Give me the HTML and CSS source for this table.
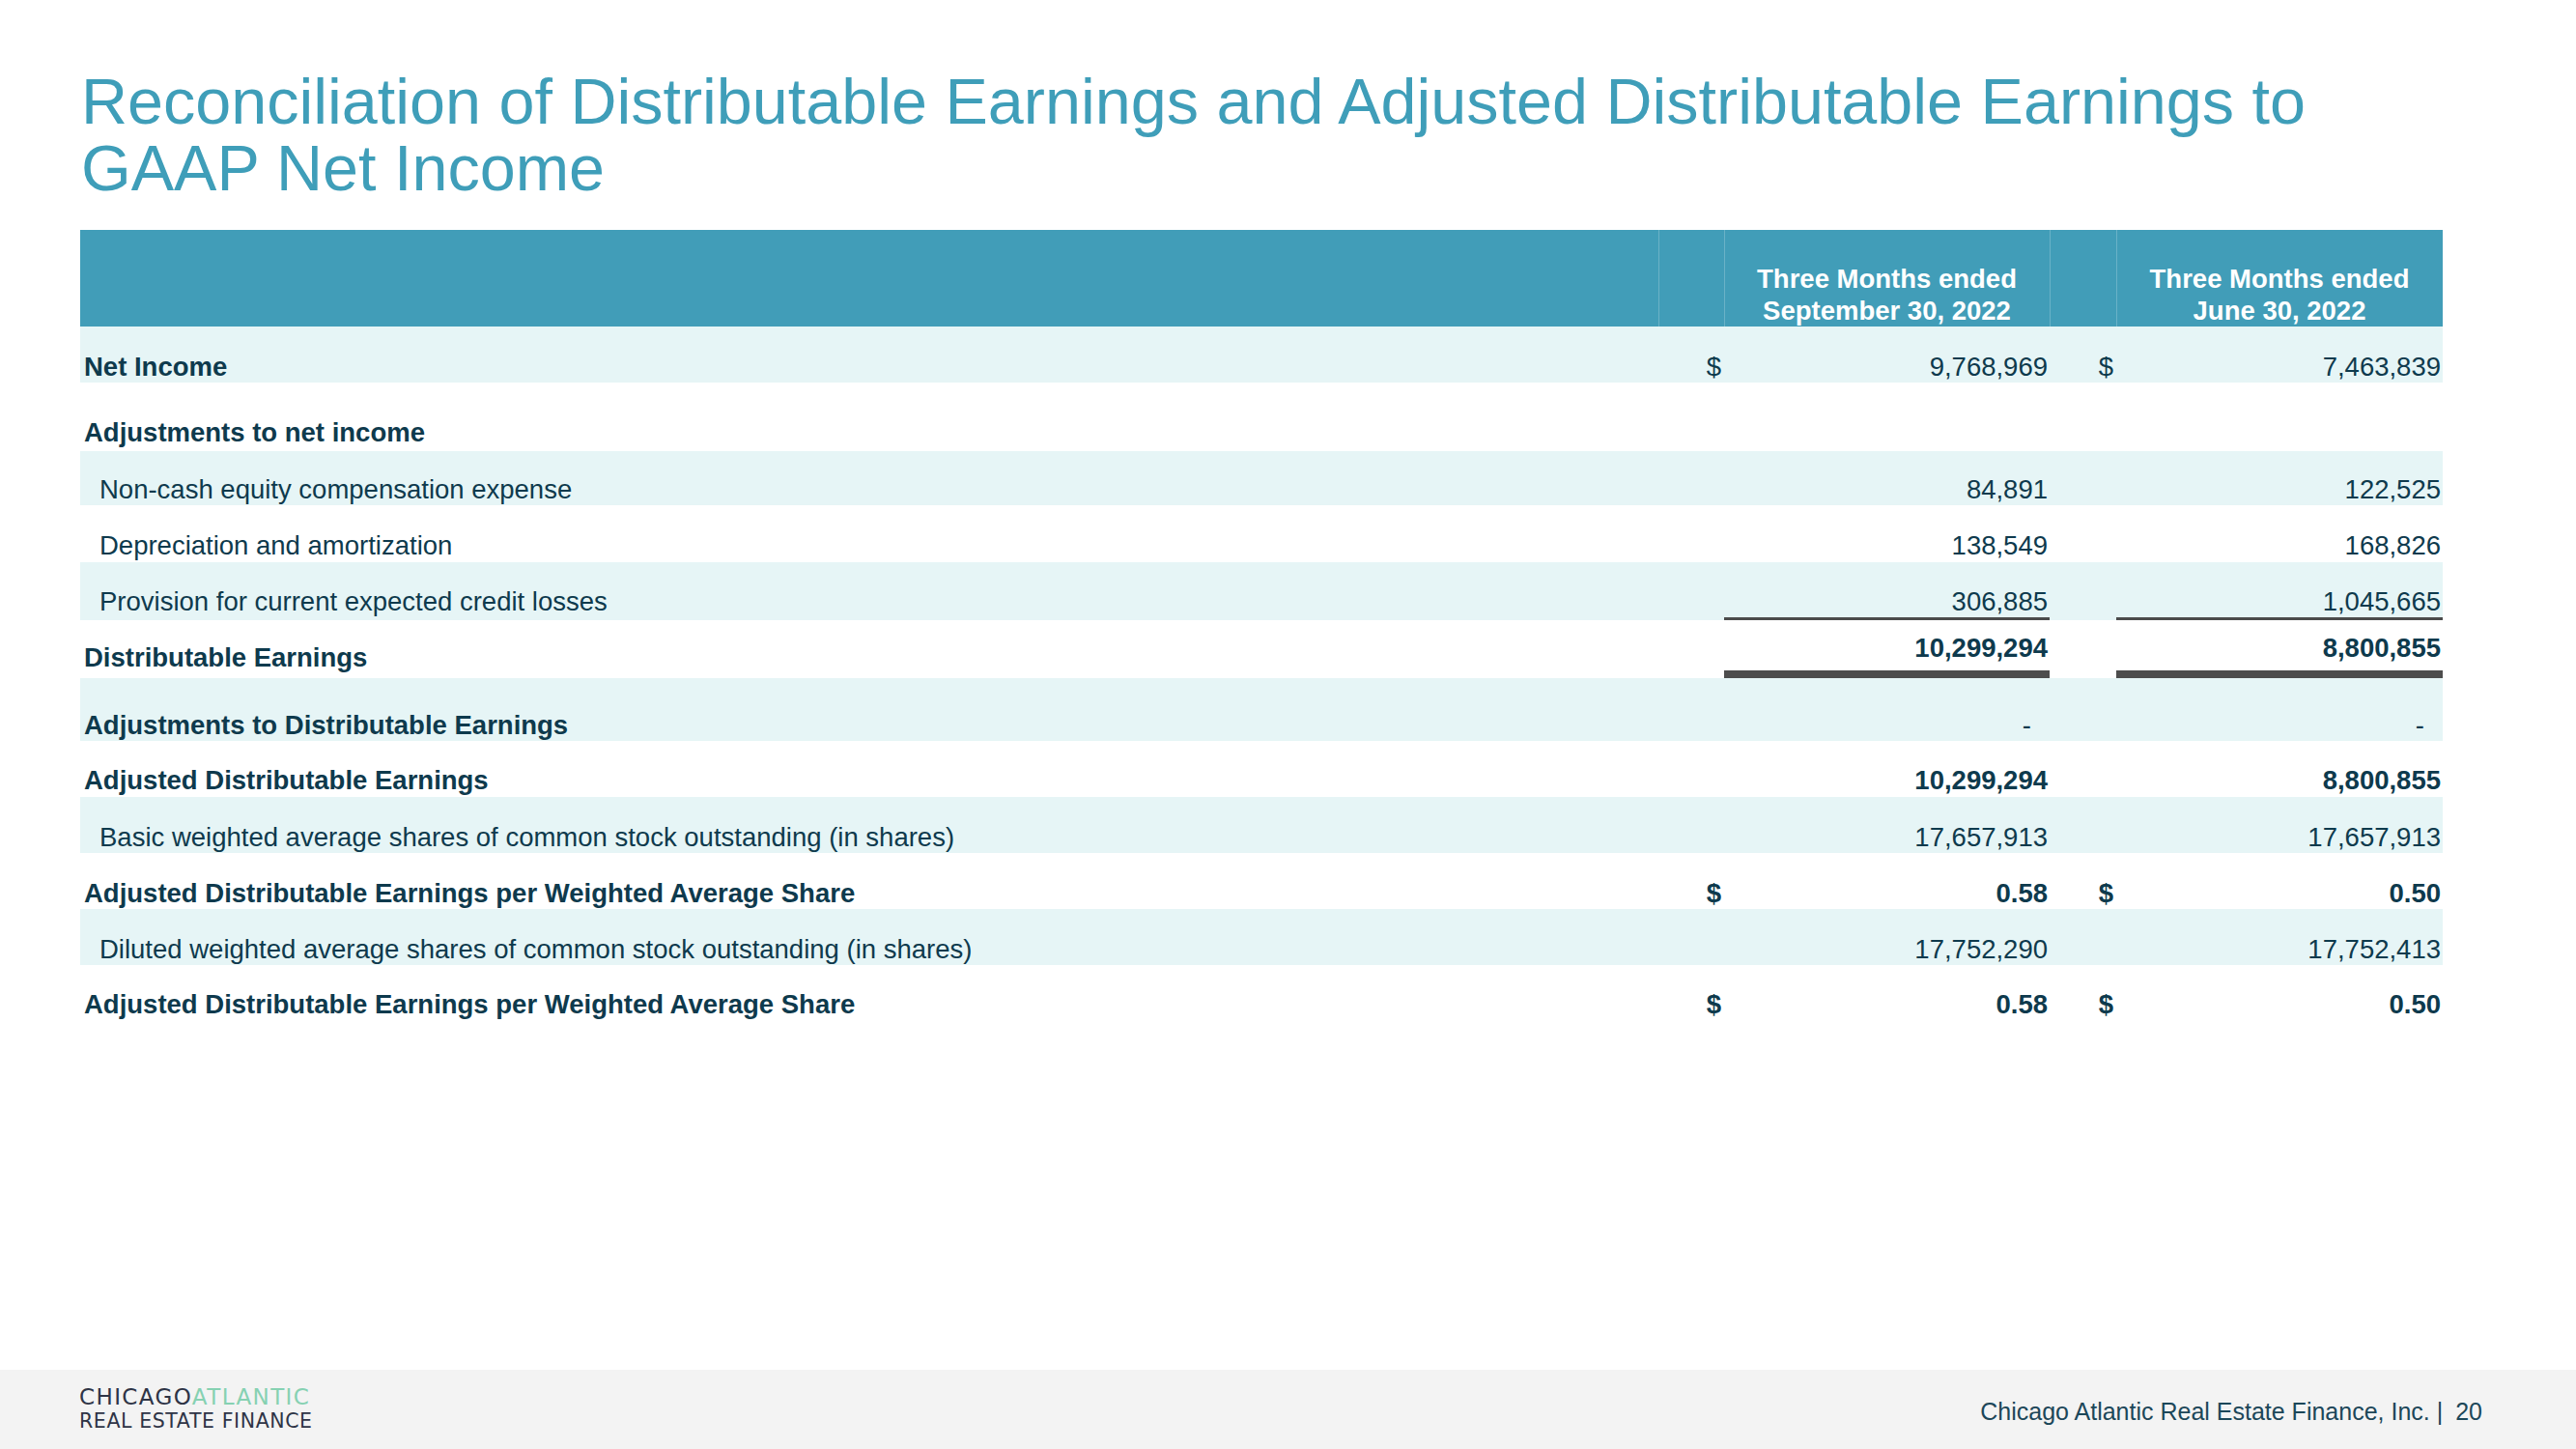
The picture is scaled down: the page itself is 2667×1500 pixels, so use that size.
FILE: index.html
```html
<!DOCTYPE html>
<html lang="en">
<head>
<meta charset="utf-8">
<title>Reconciliation of Distributable Earnings</title>
<link rel="stylesheet" href="styles.css">
</head>
<body>
<div class="slide">
  <h1 class="title">Reconciliation of Distributable Earnings and Adjusted Distributable Earnings to<br>GAAP Net Income</h1>

  <table class="recon">
    <colgroup>
      <col class="c-label">
      <col class="c-cur">
      <col class="c-val">
      <col class="c-cur2">
      <col class="c-val2">
    </colgroup>
    <thead>
      <tr class="head">
        <th></th>
        <th class="div"></th>
        <th class="div">Three Months ended<br>September 30, 2022</th>
        <th class="div"></th>
        <th class="div">Three Months ended<br>June 30, 2022</th>
      </tr>
    </thead>
    <tbody>
      <tr class="band h58">
        <td class="lbl b">Net Income</td>
        <td class="cur">$</td>
        <td class="val">9,768,969</td>
        <td class="cur">$</td>
        <td class="val">7,463,839</td>
      </tr>
      <tr class="h71 pb3">
        <td class="lbl b">Adjustments to net income</td>
        <td></td><td></td><td></td><td></td>
      </tr>
      <tr class="band h56">
        <td class="lbl ind">Non-cash equity compensation expense</td>
        <td></td>
        <td class="val">84,891</td>
        <td></td>
        <td class="val">122,525</td>
      </tr>
      <tr class="h59 pb1">
        <td class="lbl ind">Depreciation and amortization</td>
        <td></td>
        <td class="val">138,549</td>
        <td></td>
        <td class="val">168,826</td>
      </tr>
      <tr class="band h60 sub">
        <td class="lbl ind">Provision for current expected credit losses</td>
        <td class="cur"></td>
        <td class="val">306,885</td>
        <td class="cur"></td>
        <td class="val">1,045,665</td>
      </tr>
      <tr class="h60 total">
        <td class="lbl b">Distributable Earnings</td>
        <td></td>
        <td class="val b">10,299,294</td>
        <td></td>
        <td class="val b">8,800,855</td>
      </tr>
      <tr class="band h65">
        <td class="lbl b">Adjustments to Distributable Earnings</td>
        <td></td>
        <td class="val dash">-</td>
        <td></td>
        <td class="val dash">-</td>
      </tr>
      <tr class="h58 pb1">
        <td class="lbl b">Adjusted Distributable Earnings</td>
        <td></td>
        <td class="val b">10,299,294</td>
        <td></td>
        <td class="val b">8,800,855</td>
      </tr>
      <tr class="band h58">
        <td class="lbl ind">Basic weighted average shares of common stock outstanding (in shares)</td>
        <td></td>
        <td class="val">17,657,913</td>
        <td></td>
        <td class="val">17,657,913</td>
      </tr>
      <tr class="h58">
        <td class="lbl b">Adjusted Distributable Earnings per Weighted Average Share</td>
        <td class="cur b">$</td>
        <td class="val b">0.58</td>
        <td class="cur b">$</td>
        <td class="val b">0.50</td>
      </tr>
      <tr class="band h58">
        <td class="lbl ind">Diluted weighted average shares of common stock outstanding (in shares)</td>
        <td></td>
        <td class="val">17,752,290</td>
        <td></td>
        <td class="val">17,752,413</td>
      </tr>
      <tr class="h58 pb1">
        <td class="lbl b">Adjusted Distributable Earnings per Weighted Average Share</td>
        <td class="cur b">$</td>
        <td class="val b">0.58</td>
        <td class="cur b">$</td>
        <td class="val b">0.50</td>
      </tr>
    </tbody>
  </table>

  <footer class="footer">
    <div class="logo">
      <div class="logo-top">CHICAGO<span class="atl">ATLANTIC</span></div>
      <div class="logo-bottom">REAL ESTATE FINANCE</div>
    </div>
    <div class="foot-text">Chicago Atlantic Real Estate Finance, Inc. |<span class="pg">20</span></div>
  </footer>
</div>
</body>
</html>
```

FILE: styles.css
```css
html, body {
  margin: 0;
  padding: 0;
  background: #ffffff;
}

.slide {
  width: 2667px;
  height: 1500px;
  display: flex;
  flex-direction: column;
  overflow: hidden;
  font-family: "Liberation Sans", Arial, sans-serif;
  color: #0e3a4d;
}

.title {
  margin: 0;
  padding: 71px 0 0 84px;
  font-size: 66.5px;
  line-height: 69px;
  font-weight: 400;
  color: #3f9eb9;
  white-space: nowrap;
}

.recon {
  margin: 29px 0 0 83px;
  width: 2446px;
  table-layout: fixed;
  border-collapse: separate;
  border-spacing: 0;
  font-size: 27.5px;
  line-height: 1.15;
}

.c-label { width: 1634px; }
.c-cur { width: 68px; }
.c-val { width: 337px; }
.c-cur2 { width: 69px; }
.c-val2 { width: 338px; }

.recon th,
.recon td {
  padding: 0;
  vertical-align: bottom;
  white-space: nowrap;
}

.head {
  height: 100px;
  background: #419db8;
}

.head th {
  color: #ffffff;
  font-weight: 700;
  line-height: 33px;
  text-align: center;
}

.head th.div {
  box-shadow: inset 1px 0 0 rgba(255, 255, 255, 0.22);
}

.band { background: #e6f5f6; }

.h56 { height: 56px; }
.h58 { height: 58px; }
.h59 { height: 59px; }
.h60 { height: 60px; }
.h65 { height: 65px; }
.h71 { height: 71px; }

.pb1 td { padding-bottom: 1px; }
.pb3 td { padding-bottom: 3px; }

.recon td.lbl {
  text-align: left;
  padding-left: 4px;
}

.recon td.ind { padding-left: 20px; }

.b { font-weight: 700; }

.cur {
  text-align: right;
}

.recon td.cur { padding-right: 3px; }

.val {
  text-align: right;
}

.recon td.val { padding-right: 2px; }

.recon td.dash { padding-right: 19px; }

.recon .sub td.lbl { padding-bottom: 3px; }
.sub td.val { border-bottom: 3px solid #4b4b4b; }

.recon .total td.lbl { padding-bottom: 5px; }
.recon .total td.val {
  padding-bottom: 7px;
  border-bottom: 8px solid #4d4d4d;
}

.footer {
  margin-top: auto;
  height: 82px;
  box-sizing: border-box;
  background: #f3f3f3;
  display: flex;
  justify-content: space-between;
  align-items: flex-start;
  padding: 0 97px 0 82px;
}

.logo {
  padding-top: 16px;
  font-family: "DejaVu Sans", "Liberation Sans", sans-serif;
  color: #2e3446;
}

.logo-top {
  font-size: 23px;
  line-height: 25px;
  letter-spacing: 1.4px;
}

.atl { color: #86d1b2; }

.logo-bottom {
  font-size: 20.5px;
  line-height: 25px;
  letter-spacing: 0.6px;
}

.foot-text {
  padding-top: 29px;
  font-size: 25px;
  line-height: 1.15;
  color: #1c4759;
  white-space: nowrap;
}

.pg { margin-left: 13px; }
```
